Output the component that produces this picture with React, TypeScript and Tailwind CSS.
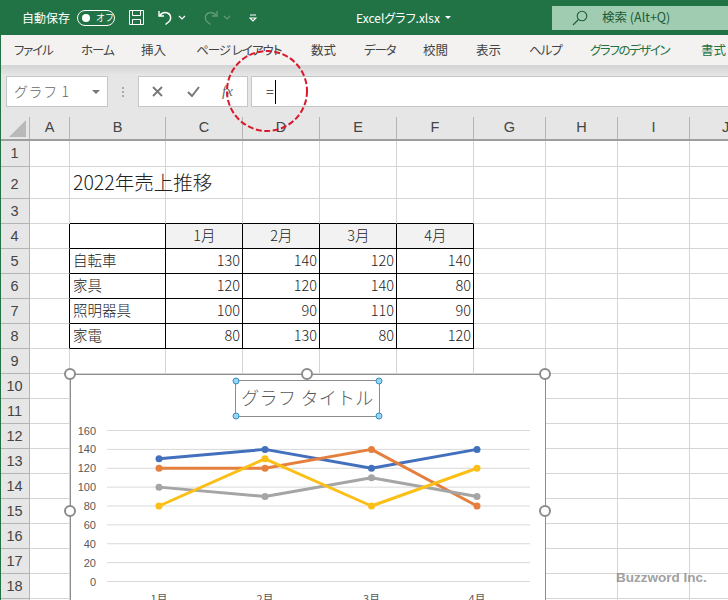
import React from "react";

const JP = "font-['Noto_Sans_CJK_JP','Liberation_Sans',sans-serif]";

const TABS = [
  { label: "ファイル", w: "w-[39px] tracking-[-1.2px]" },
  { label: "ホーム", w: "w-[32px] tracking-[-1px]" },
  { label: "挿入", w: "w-[27px]" },
  { label: "ページ レイアウト", w: "w-[87px] tracking-[-1px]" },
  { label: "数式", w: "w-[25px]" },
  { label: "データ", w: "w-[31px] tracking-[-1.2px]" },
  { label: "校閲", w: "w-[25px]" },
  { label: "表示", w: "w-[25px]" },
  { label: "ヘルプ", w: "w-[33px] tracking-[-1px]" },
];

const COLS = ["A", "B", "C", "D", "E", "F", "G", "H", "I", "J"];

// row number -> cells by column
const CELLS: Record<number, Record<string, string>> = {
  4: { C: "1月", D: "2月", E: "3月", F: "4月" },
  5: { B: "自転車", C: "130", D: "140", E: "120", F: "140" },
  6: { B: "家具", C: "120", D: "120", E: "140", F: "80" },
  7: { B: "照明器具", C: "100", D: "90", E: "110", F: "90" },
  8: { B: "家電", C: "80", D: "130", E: "80", F: "120" },
};

const ROWS = Array.from({ length: 19 }, (_, i) => i + 1);

const SERIES = [
  { color: "#4270bd", values: [130, 140, 120, 140] },
  { color: "#e57f3e", values: [120, 120, 140, 80] },
  { color: "#a5a5a5", values: [100, 90, 110, 90] },
  { color: "#fbbf17", values: [80, 130, 80, 120] },
];

const XS = [159, 265, 371.5, 477];
const TICKS = [160, 140, 120, 100, 80, 60, 40, 20, 0];
const yFor = (v: number) => 581.5 - (v / 160) * 151;

function TitleBar() {
  return (
    <div className={`flex h-[35px] shrink-0 items-center bg-[#217346] text-white ${JP}`}>
      <span className="ml-[22px] w-[48px] whitespace-nowrap text-[12px]">自動保存</span>
      <div className="ml-[7px] flex h-[16px] w-[38px] items-center rounded-full border border-white pl-[4px]">
        <span className="h-[8px] w-[8px] rounded-full bg-white" />
        <span className="ml-[6px] text-[9px] leading-none">オフ</span>
      </div>
      <svg className="ml-[13px]" width="17" height="17" viewBox="0 0 17 17" fill="none" stroke="white" strokeWidth="1">
        <path d="M1.5 1.5h14v14h-14z" />
        <path d="M4.5 1.5v5h8v-5M4.5 15.5v-5h8v5" />
      </svg>
      <svg className="ml-[12px]" width="17" height="17" viewBox="0 0 17 17" fill="none" stroke="white" strokeWidth="1.4">
        <path d="M2 2v5h5" />
        <path d="M2.5 7c2-3 5-4 8-3 4 1.5 4 7 1 9l-3 2.5" />
      </svg>
      <svg className="ml-[4px]" width="8" height="5" viewBox="0 0 8 5" fill="none" stroke="white" strokeWidth="1.2">
        <path d="M1 1l3 3 3-3" />
      </svg>
      <svg className="ml-[16px]" width="17" height="17" viewBox="0 0 17 17" fill="none" stroke="#5f9a78" strokeWidth="1.4">
        <path d="M15 2v5h-5" />
        <path d="M14.5 7c-2-3-5-4-8-3-4 1.5-4 7-1 9l3 2.5" />
      </svg>
      <svg className="ml-[4px]" width="8" height="5" viewBox="0 0 8 5" fill="none" stroke="#5f9a78" strokeWidth="1.2">
        <path d="M1 1l3 3 3-3" />
      </svg>
      <svg className="ml-[18px]" width="8" height="8" viewBox="0 0 8 8" fill="none" stroke="white" strokeWidth="1.1">
        <path d="M1 1h6M1 4l3 3 3-3z" />
      </svg>
      <span className="ml-[99px] w-[82px] whitespace-nowrap text-[12px] [font-feature-settings:'palt']">Excelグラフ.xlsx</span>
      <span className="ml-[7px] h-0 w-0 border-x-[3px] border-t-[3px] border-x-transparent border-t-white" />
      <div className="ml-[101px] flex h-[24px] flex-1 items-center bg-[#a0cdb1] pl-[20px] text-[#1d5b38]">
        <svg width="16" height="16" viewBox="0 0 16 16" fill="none" stroke="#1d5b38" strokeWidth="1.1">
          <circle cx="10" cy="6" r="4.8" />
          <path d="M6.5 9.5L1 15" />
        </svg>
        <span className="ml-[14px] whitespace-nowrap text-[12.5px]">検索 (Alt+Q)</span>
      </div>
    </div>
  );
}

function TabBar() {
  return (
    <div className={`flex h-[30px] shrink-0 items-center gap-[28px] bg-[#f3f2f1] pl-[14px] text-[12.5px] text-[#444] [font-feature-settings:'palt'] ${JP}`}>
      {TABS.map((t) => (
        <span key={t.label} className={`${t.w} whitespace-nowrap`}>
          {t.label}
        </span>
      ))}
      <span className="w-[83px] whitespace-nowrap tracking-[-1.4px] text-[#217346]">グラフのデザイン</span>
      <span className="whitespace-nowrap text-[#217346]">書式</span>
    </div>
  );
}

function FormulaBar() {
  return (
    <div className={`h-[52px] shrink-0 bg-gradient-to-b from-[#d4d4d4] from-0% via-[#e6e6e6] via-20% to-[#e6e6e6] pl-[6px] pt-[11px] ${JP}`}>
      <div className="flex h-[31px] items-center">
        <div className="flex h-full w-[102px] items-center border border-[#c6c6c6] bg-white pl-[7px] pr-[7px] text-[14px] font-light text-[#666]">
          <span className="flex-1 whitespace-nowrap tracking-[0.6px]">グラフ 1</span>
          <span className="h-0 w-0 border-x-[4px] border-t-[4px] border-x-transparent border-t-[#777]" />
        </div>
        <div className="ml-[14px] flex w-[3px] flex-col gap-[2px]">
          <span className="h-[2px] w-[2px] bg-[#aaa]" />
          <span className="h-[2px] w-[2px] bg-[#aaa]" />
          <span className="h-[2px] w-[2px] bg-[#aaa]" />
        </div>
        <div className="ml-[13px] flex h-full w-[110px] items-center border border-[#c6c6c6] bg-white pl-[13px]">
          <svg width="11" height="11" viewBox="0 0 11 11" fill="none" stroke="#777" strokeWidth="1.8">
            <path d="M1 1l9 9M10 1l-9 9" />
          </svg>
          <svg className="ml-[24px]" width="13" height="11" viewBox="0 0 13 11" fill="none" stroke="#777" strokeWidth="2">
            <path d="M1 6l4 4 7-9" />
          </svg>
          <span className="ml-[22px] font-['Liberation_Serif',serif] text-[15px] italic leading-none text-[#666]">fx</span>
        </div>
        <div className="ml-[3px] flex h-full flex-1 items-center border-y border-l border-[#c6c6c6] bg-white pl-[14px] text-[14px] text-[#555]">
          <span>=</span>
          <span className="ml-[1px] h-[24px] w-px bg-black" />
        </div>
      </div>
    </div>
  );
}

function ColumnHeader() {
  return (
    <div className="grid h-[24px] shrink-0 grid-cols-[30px_40px_96px_77px_77px_77px_77px_72px_72px_72px_72px] border-b-2 border-[#9e9e9e] bg-[#e6e6e6] font-['Liberation_Sans',sans-serif] text-[14.5px] text-[#444]">
      <div className="flex items-end border-r border-[#b4b4b4] pb-[2px] pl-[9px]">
        <span className="h-0 w-0 border-b-[17px] border-l-[17px] border-b-[#b9b9b9] border-l-transparent" />
      </div>
      {COLS.map((c) => (
        <div key={c} className="flex items-center justify-center border-r border-[#b4b4b4]">
          {c}
        </div>
      ))}
    </div>
  );
}

function Cell({ row, col }: { row: number; col: string }) {
  const text = CELLS[row]?.[col];
  const inTable = row >= 4 && row <= 8;
  const tableCol = ["B", "C", "D", "E", "F"].includes(col);
  const blackRight = inTable && (tableCol || col === "A");
  const blackBottom = row >= 3 && row <= 8 && tableCol;
  const isHead = row === 4 && tableCol && col !== "B";
  const isNum = text !== undefined && col !== "B" && !isHead;

  return (
    <div
      className={[
        "flex items-center overflow-hidden whitespace-nowrap border-b border-r pb-[2px] text-[14.5px] font-light text-[#222]",
        blackRight ? "border-r-black" : "border-r-[#d4d4d4]",
        blackBottom ? "border-b-black" : "border-b-[#d4d4d4]",
        isHead ? "justify-center bg-[#f2f2f2] pr-[2px]" : "",
        isNum ? "justify-end pr-[2px]" : "pl-[3px]",
      ].join(" ")}
    >
      {text}
    </div>
  );
}

function Sheet() {
  return (
    <div className={`relative min-h-0 flex-1 ${JP}`}>
      <div className="grid grid-cols-[30px_40px_96px_77px_77px_77px_77px_72px_72px_72px_72px] grid-rows-[26px_32px_25px_25px_25px_25px_25px_25px_25px_25px_25px_25px_25px_25px_25px_25px_25px_25px_25px]">
        {ROWS.map((row) => (
          <React.Fragment key={row}>
            <div
              className={`flex items-center justify-center border-b border-r border-[#b4b4b4] bg-[#e6e6e6] font-['Liberation_Sans',sans-serif] text-[14.5px] text-[#444] ${
                row === 2 ? "pt-[4px]" : "pt-[1px]"
              }`}
            >
              {row < 19 ? row : ""}
            </div>
            {COLS.map((col) => (
              <Cell key={col} row={row} col={col} />
            ))}
          </React.Fragment>
        ))}
      </div>
      <div className="absolute left-[73px] top-[25px] flex h-[32px] items-center whitespace-nowrap text-[19.5px] font-light text-[#222]">
        2022年売上推移
      </div>
      <Chart />
    </div>
  );
}

function Handle({ className }: { className: string }) {
  return <span className={`absolute h-[12px] w-[12px] -translate-x-1/2 -translate-y-1/2 rounded-full border-2 border-[#8c8c8c] bg-white ${className}`} />;
}

function BlueDot({ className }: { className: string }) {
  return <span className={`absolute h-[7px] w-[7px] -translate-x-1/2 -translate-y-1/2 rounded-full border border-[#2f8fc4] bg-[#9bd3f2] ${className}`} />;
}

// sits over the grid cells, same as a floating chart object in the sheet
function Chart() {
  return (
    <div className="absolute left-[70px] top-[233px] h-[250px] w-[476px] border border-[#8c8c8c] bg-white">
      <svg className="block h-[226px] w-[474px]" viewBox="71 375 474 226">
        {TICKS.map((t) => (
          <g key={t}>
            <line x1="107" x2="530" y1={yFor(t)} y2={yFor(t)} stroke="#d9d9d9" strokeWidth="1" />
            <text x="96" y={yFor(t) + 4} textAnchor="end" fontSize="11" fill="#595959" fontFamily="'Liberation Sans', sans-serif">
              {t}
            </text>
          </g>
        ))}
        {SERIES.map((s) => (
          <g key={s.color}>
            <polyline
              points={s.values.map((v, i) => `${XS[i]},${yFor(v)}`).join(" ")}
              fill="none"
              stroke={s.color}
              strokeWidth="3"
              strokeLinejoin="round"
              strokeLinecap="round"
            />
            {s.values.map((v, i) => (
              <circle key={i} cx={XS[i]} cy={yFor(v)} r="3.5" fill={s.color} />
            ))}
          </g>
        ))}
        {["1月", "2月", "3月", "4月"].map((m, i) => (
          <text key={m} x={XS[i]} y="603" textAnchor="middle" fontSize="11" fill="#595959" fontFamily="'Noto Sans CJK JP', sans-serif">
            {m}
          </text>
        ))}
      </svg>
      <div className="absolute left-[164px] top-[5px] flex h-[37px] w-[145px] items-center justify-center whitespace-nowrap border border-[#8c8c8c] pb-[2px] text-[18px] font-light tracking-[0.3px] text-[#595959]">
        グラフ タイトル
        <BlueDot className="left-0 top-0" />
        <BlueDot className="left-full top-0" />
        <BlueDot className="left-0 top-full" />
        <BlueDot className="left-full top-full" />
      </div>
      <Handle className="-left-px -top-px" />
      <Handle className="left-[236px] -top-px" />
      <Handle className="left-full -top-px" />
      <Handle className="-left-px top-[136px]" />
      <Handle className="left-full top-[136px]" />
    </div>
  );
}

export default function App() {
  return (
    <div className="relative flex h-[600px] w-[728px] flex-col overflow-hidden bg-white">
      <TitleBar />
      <TabBar />
      <FormulaBar />
      <ColumnHeader />
      <Sheet />

      {/* green window edge */}
      <span className="absolute bottom-0 left-0 top-0 w-px bg-[#217346]" />

      {/* red callout ring drawn on top of the screenshot */}
      <svg className="absolute left-[225px] top-[49px]" width="84" height="84" viewBox="0 0 84 84" fill="none">
        <circle cx="42" cy="42" r="40" stroke="#d8192b" strokeWidth="2" strokeDasharray="6 2.5" />
      </svg>

      <div className="absolute left-[616px] top-[568px] font-['Liberation_Sans',sans-serif] text-[13.5px] font-bold text-[#8a8a8a] opacity-80">
        Buzzword Inc.
      </div>
    </div>
  );
}
